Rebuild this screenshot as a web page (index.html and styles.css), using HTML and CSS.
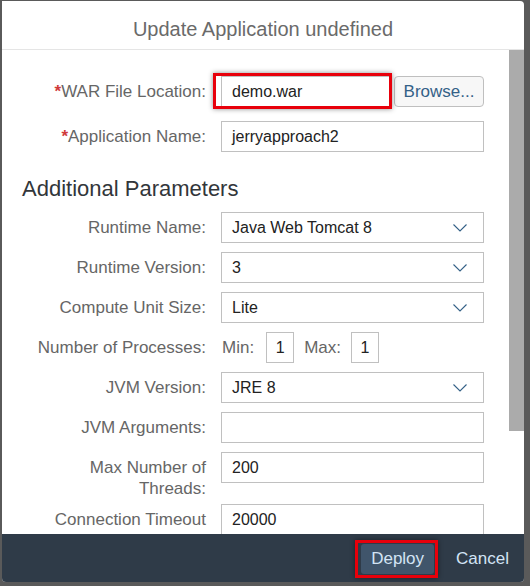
FILE: index.html
```html
<!DOCTYPE html>
<html lang="en">
<head>
<meta charset="utf-8">
<title>Update Application</title>
<link rel="stylesheet" href="styles.css">
</head>
<body>
<div class="dialog">
  <header class="dlg-header">
    <h1 class="dlg-title">Update Application undefined</h1>
  </header>
  <div class="dlg-body">
    <div class="dlg-content">
      <div class="row row-first">
        <div class="lbl"><span class="req">*</span>WAR File Location:</div>
        <div class="ctrl file-ctrl">
          <div class="file-wrap">
            <div class="input">demo.war</div>
            <span class="mark mark-file"></span>
          </div>
          <div class="btn-browse">Browse...</div>
        </div>
      </div>
      <div class="row">
        <div class="lbl"><span class="req">*</span>Application Name:</div>
        <div class="ctrl"><div class="input">jerryapproach2</div></div>
      </div>

      <h2 class="section-title">Additional Parameters</h2>

      <div class="row">
        <div class="lbl">Runtime Name:</div>
        <div class="ctrl"><div class="input select">Java Web Tomcat 8<svg class="chev" viewBox="0 0 14 8"><path d="M0.5 0.5 L7 7 L13.5 0.5"/></svg></div></div>
      </div>
      <div class="row">
        <div class="lbl">Runtime Version:</div>
        <div class="ctrl"><div class="input select">3<svg class="chev" viewBox="0 0 14 8"><path d="M0.5 0.5 L7 7 L13.5 0.5"/></svg></div></div>
      </div>
      <div class="row">
        <div class="lbl">Compute Unit Size:</div>
        <div class="ctrl"><div class="input select">Lite<svg class="chev" viewBox="0 0 14 8"><path d="M0.5 0.5 L7 7 L13.5 0.5"/></svg></div></div>
      </div>
      <div class="row">
        <div class="lbl">Number of Processes:</div>
        <div class="ctrl minmax">
          <span class="mm-lbl mm-min">Min:</span>
          <div class="input small">1</div>
          <span class="mm-lbl">Max:</span>
          <div class="input small">1</div>
        </div>
      </div>
      <div class="row">
        <div class="lbl">JVM Version:</div>
        <div class="ctrl"><div class="input select">JRE 8<svg class="chev" viewBox="0 0 14 8"><path d="M0.5 0.5 L7 7 L13.5 0.5"/></svg></div></div>
      </div>
      <div class="row">
        <div class="lbl">JVM Arguments:</div>
        <div class="ctrl"><div class="input"></div></div>
      </div>
      <div class="row">
        <div class="lbl">Max Number of Threads:</div>
        <div class="ctrl"><div class="input">200</div></div>
      </div>
      <div class="row">
        <div class="lbl">Connection Timeout (ms):</div>
        <div class="ctrl"><div class="input">20000</div></div>
      </div>
    </div>
    <div class="scrollbar"><div class="thumb"></div></div>
  </div>
  <footer class="dlg-footer">
    <div class="deploy-wrap">
      <div class="btn btn-deploy">Deploy</div>
      <span class="mark mark-deploy"></span>
    </div>
    <div class="btn btn-cancel">Cancel</div>
  </footer>
</div>
</body>
</html>
```
FILE: styles.css
```css
html, body {
  margin: 0;
  padding: 0;
}
body {
  background: #5a5a5a;
  font-family: "Liberation Sans", Arial, sans-serif;
  width: 530px;
  height: 586px;
  overflow: hidden;
}
.dialog {
  margin: 1px 0 0 2px;
  width: 522px;
  height: 581px;
  background: #ffffff;
  border-radius: 0 4px 4px 4px;
  display: flex;
  flex-direction: column;
  overflow: hidden;
}
.dlg-header {
  height: 49px;
  flex: none;
  border-bottom: 1px solid #e5e5e5;
  display: flex;
  align-items: center;
  justify-content: center;
  padding-top: 8px;
  box-sizing: border-box;
}
.dlg-title {
  margin: 0;
  font-size: 20px;
  font-weight: normal;
  color: #6a6a6a;
}
.dlg-body {
  flex: 1;
  display: flex;
  min-height: 0;
}
.dlg-content {
  flex: 1;
  padding-top: 26px;
  overflow: hidden;
}
.scrollbar {
  width: 15px;
  flex: none;
  background: #ffffff;
}
.thumb {
  height: 381px;
  background: #ababab;
}
.row {
  display: grid;
  grid-template-columns: 204px 263px;
  column-gap: 15px;
  align-items: start;
  min-height: 35px;
  margin-bottom: 5px;
}
.row-first {
  min-height: 40px;
}
.lbl {
  text-align: right;
  font-size: 17px;
  line-height: 21px;
  padding: 5px 0 0 30px;
  color: #666666;
}
.req {
  color: #d03a3a;
  font-weight: bold;
}
.ctrl {
  display: flex;
  align-items: center;
}
.input {
  box-sizing: border-box;
  height: 31px;
  flex: 1;
  border: 1px solid #c0c0c0;
  background: #ffffff;
  padding: 0 10px;
  font-size: 16px;
  color: #222222;
  display: flex;
  align-items: center;
}
.select {
  justify-content: space-between;
  padding-right: 16px;
}
.chev {
  width: 14px;
  height: 8px;
  fill: none;
  stroke: #346187;
  stroke-width: 1.1;
}
.file-ctrl {
  gap: 4px;
}
.file-wrap {
  position: relative;
  flex: none;
  width: 169px;
  display: flex;
}
.btn-browse {
  box-sizing: border-box;
  flex: 1;
  height: 31px;
  border: 1px solid #bfbfbf;
  border-radius: 4px;
  background: #f7f7f7;
  color: #346187;
  font-size: 17px;
  display: flex;
  align-items: center;
  justify-content: center;
}
.mark {
  position: absolute;
  border: 3px solid #e8000b;
  box-shadow: 0 0 5px rgba(0, 0, 0, 0.45);
  pointer-events: none;
}
.mark-file {
  top: -3px;
  bottom: -2px;
  left: -8px;
  right: -2px;
}
.section-title {
  margin: 21px 0 11px 20px;
  font-size: 22px;
  line-height: 24px;
  font-weight: normal;
  color: #32363a;
}
.minmax {
  gap: 10px;
}
.mm-lbl {
  font-size: 17px;
  color: #666666;
  line-height: 31px;
}
.mm-min {
  margin-left: 1px;
  margin-right: 2px;
}
.input.small {
  flex: none;
  width: 28px;
  padding: 0;
  justify-content: center;
}
.dlg-footer {
  flex: none;
  height: 48px;
  background: #2f3b48;
  display: flex;
  align-items: center;
  justify-content: flex-end;
  padding-right: 5px;
  padding-top: 1px;
  box-sizing: border-box;
}
.btn {
  font-size: 17px;
  color: #d3e4f5;
  height: 30px;
  display: flex;
  align-items: center;
  padding: 0 10px;
  box-sizing: border-box;
}
.deploy-wrap {
  position: relative;
  margin-right: 12px;
}
.btn-deploy {
  background: #40556b;
  border-radius: 3px;
}
.mark-deploy {
  top: -4px;
  bottom: -4px;
  left: -6px;
  right: -4px;
}
```
